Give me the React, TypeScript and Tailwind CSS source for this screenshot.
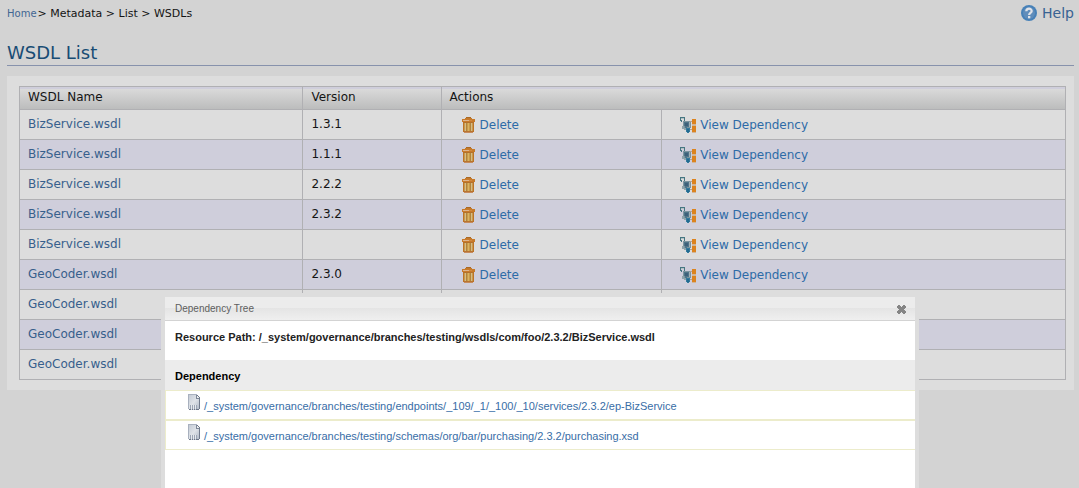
import React from "react";

type Row = { name: string; version?: string; editable?: boolean };

const rows: Row[] = [
  { name: "BizService.wsdl", version: "1.3.1", editable: true },
  { name: "BizService.wsdl", version: "1.1.1", editable: true },
  { name: "BizService.wsdl", version: "2.2.2", editable: true },
  { name: "BizService.wsdl", version: "2.3.2", editable: true },
  { name: "BizService.wsdl", editable: true },
  { name: "GeoCoder.wsdl", version: "2.3.0", editable: true },
  { name: "GeoCoder.wsdl" },
  { name: "GeoCoder.wsdl" },
  { name: "GeoCoder.wsdl" },
];

const dependencies = [
  "/_system/governance/branches/testing/endpoints/_109/_1/_100/_10/services/2.3.2/ep-BizService",
  "/_system/governance/branches/testing/schemas/org/bar/purchasing/2.3.2/purchasing.xsd",
];

function TrashIcon() {
  return (
    <svg width="13" height="16" viewBox="0 0 13 16" shapeRendering="crispEdges" aria-hidden="true">
      <path d="M4 0h5v1H4z" fill="#ac6a24" />
      <path d="M3 1h7v1H3z" fill="#c27a2c" />
      <path d="M0 2h13v3H0z" fill="#c87a2a" />
      <path d="M1 3h6v1H1z" fill="#deb48c" />
      <path d="M7 3h3v1H7z" fill="#d08a40" />
      <path d="M1 5h11v10H1z" fill="#c99a4c" />
      <path d="M1 5h11v1H1z" fill="#b4702c" />
      <path d="M1 6h1v9H1zM11 6h1v9h-1z" fill="#bd7326" />
      <path d="M3 6h1v8H3zM9 6h1v8H9z" fill="#d5bb88" />
      <path d="M4 6h1v8H4zM8 6h1v8H8z" fill="#b0853c" />
      <path d="M6 6h1v8H6z" fill="#d8b562" />
      <path d="M2 14h9v1H2z" fill="#b87432" />
      <path d="M2 15h9v1H2z" fill="#c58b5c" />
    </svg>
  );
}

function DependencyIcon() {
  return (
    <svg width="16" height="16" viewBox="0 0 16 16" shapeRendering="crispEdges" aria-hidden="true">
      <path d="M9 4h3v1H9zM8 12h4v1H8z" fill="#b3a08f" />
      <path d="M0 0h5v1H0zM0 1h1v3H0zM4 1h1v3H4zM1 3h1v2H1z" fill="#477681" />
      <path d="M1 1h3v1H1z" fill="#b0c0c3" />
      <path d="M3 4h7v1h1v6H9v1H5v-1H4V9H3z" fill="#7d959f" />
      <path d="M4 5h5v5H7v1H5V9H4z" fill="#4f7589" />
      <path d="M5 6h3v3H5z" fill="#3d6079" />
      <path d="M9 5h1v5H9z" fill="#a3b0b5" />
      <path d="M2 9h2v2h2v2H4v-1H2z" fill="#8ea3aa" />
      <path d="M6 11h4v4H9v1H7v-1H6z" fill="#34799b" />
      <path d="M7 12h2v3H7z" fill="#216b91" />
      <path d="M12 2h4v5h-4zM12 9h4v6h-4z" fill="#dc831e" />
      <path d="M12 7h4v1h-4zM12 8h4v1h-4zM12 15h4v1h-4z" fill="#d0b598" />
    </svg>
  );
}

function HelpIcon() {
  return (
    <svg width="16" height="16" viewBox="0 0 16 16" aria-hidden="true">
      <circle cx="8" cy="8" r="8" fill="#4781b8" />
      <circle cx="8" cy="8" r="6" fill="#608dbb" />
      <path d="M5.300 6.300C5.400 2.800 10.700 3 10.700 6 10.700 7.900 8.100 7.900 8.100 10" fill="none" stroke="#e0e3e8" strokeWidth="2.2" />
      <path d="M7 11h2.300v2.300H7z" fill="#e0e3e8" />
    </svg>
  );
}

function DocumentIcon() {
  return (
    <svg width="12" height="16" viewBox="0 0 12 16" shapeRendering="crispEdges" aria-hidden="true">
      <defs>
        <linearGradient id="sheet" x1="0" y1="0" x2="1" y2="1">
          <stop offset="0" stopColor="#c0c7d2" />
          <stop offset=".5" stopColor="#dfe3e8" />
          <stop offset="1" stopColor="#aab4c3" />
        </linearGradient>
      </defs>
      <path d="M0 0h9v1h1v1h1v1h1v12h-1v1H1v-1H0z" fill="url(#sheet)" />
      <path d="M0 0h9v1H0zM0 1h1v14H0z" fill="#a9b1bf" />
      <path d="M8 1h1v3h3v1H8z" fill="#7d8797" />
      <path d="M9 1h1v1h1v2H9z" fill="#eef0f3" />
      <path d="M9 1h1v1H9zM10 2h1v1h-1zM11 3h1v12h-1z" fill="#707a8b" />
      <path d="M2 11h1v4H2zM4 11h1v4H4zM6 11h1v4H6zM8 11h1v4H8z" fill="#9ba5b4" />
      <path d="M3 11h1v4H3zM5 11h1v4H5zM7 11h1v4H7z" fill="#e6e9ed" />
      <path d="M1 15h2v1H1zM4 15h1v1H4zM6 15h1v1H6zM8 15h3v1H8z" fill="#6d7788" />
    </svg>
  );
}

function CloseIcon() {
  return (
    <svg width="9" height="9" viewBox="0 0 9 9" shapeRendering="crispEdges" aria-hidden="true">
      <path d="M1 0h2v1h1v1h1V1h1V0h2v1h1v2H8v1H7v1h1v1h1v2H8v1H6V8H5V7H4v1H3v1H1V8H0V6h1V5h1V4H1V3H0V1h1z" fill="#858585" />
    </svg>
  );
}

const cell = "border border-[#b0b0b3]";

export default function App() {
  return (
    <div className="min-h-screen bg-[#d3d3d3] pl-[7px] pr-[5px] font-['DejaVu_Sans',sans-serif] text-xs text-[#141414]">
      <header className="flex items-start justify-between">
        <nav aria-label="Breadcrumb" className="flex items-baseline gap-px pt-[6px] text-[11px] leading-4">
          <a href="#home" className="text-[10px] text-[#426692]">Home</a>
          <span>&gt; Metadata &gt; List &gt; WSDLs</span>
        </nav>
        <a href="#help" className="flex items-center gap-[5px] pt-[3px] text-sm leading-5 text-[#386292]">
          <HelpIcon />
          Help
        </a>
      </header>
      <h1 className="mt-[18px] border-b border-[#8792ac] text-lg leading-6 text-[#184c74]">WSDL List</h1>
      <main className="mt-[10px] bg-[#dddddd] pb-[10px] pl-3 pr-2 pt-[10px]">
        <table className="w-full table-fixed border-collapse text-left">
          <colgroup>
            <col className="w-[27.1%]" />
            <col className="w-[13.2%]" />
            <col className="w-[21.1%]" />
            <col />
          </colgroup>
          <thead>
            <tr className="h-[23px] bg-linear-to-b from-[#dddddd] to-[#babbbb] align-top leading-5">
              <th className={`${cell} px-2 font-normal shadow-[inset_0_2px_0_#cfcedb]`}>WSDL Name</th>
              <th className={`${cell} px-2 font-normal shadow-[inset_0_2px_0_#cfcedb]`}>Version</th>
              <th colSpan={2} className={`${cell} px-2 font-normal shadow-[inset_0_2px_0_#cfcedb]`}>Actions</th>
            </tr>
          </thead>
          <tbody>
            {rows.map((row, i) => (
              <tr key={i} className="h-[30px] align-top leading-5 even:bg-[#cfcedb]">
                <td className={`${cell} px-2 pt-1`}>
                  <a href="#wsdl" className="text-[#375f8c]">{row.name}</a>
                </td>
                <td className={`${cell} px-2 pt-1`}>{row.version}</td>
                <td className={`${cell} pl-5 pt-[5px]`}>
                  {row.editable && (
                    <a href="#delete" className="flex items-center gap-[5px] text-[#2d6ba7]">
                      <TrashIcon />
                      Delete
                    </a>
                  )}
                </td>
                <td className={`${cell} pl-[18px] pt-[5px]`}>
                  {row.editable && (
                    <a href="#dependency" className="flex items-center gap-1 text-[#2d6ba7]">
                      <DependencyIcon />
                      View Dependency
                    </a>
                  )}
                </td>
              </tr>
            ))}
          </tbody>
        </table>
      </main>

      <section
        role="dialog"
        aria-labelledby="dialog-title"
        className="fixed bottom-0 left-[161px] right-[160px] top-[293px] border-4 border-b-0 border-[#dddddd] bg-white font-['Liberation_Sans',sans-serif] text-[11px]"
      >
        <div className="flex h-6 items-center justify-between border-b border-[#d3d3d3] bg-[linear-gradient(#ececec_0,#ececec_11px,#e4e4e4_11px,#efefef_23px)] pl-[10px] pr-[9px] pt-px">
          <h2 id="dialog-title" className="text-[10px] text-[#5e5e5e]">Dependency Tree</h2>
          <button type="button" aria-label="Close">
            <CloseIcon />
          </button>
        </div>
        <p className="pb-[15px] pl-[10px] pt-2 font-bold leading-4 text-[#222222]">
          Resource Path: /_system/governance/branches/testing/wsdls/com/foo/2.3.2/BizService.wsdl
        </p>
        <h3 className="bg-[#ececec] pb-[6px] pl-[10px] pt-2 font-bold leading-4 text-black">Dependency</h3>
        <ul>
          {dependencies.map((path) => (
            <li key={path} className="h-[30px] border-y border-l border-[#ececcb] pl-[22px] pt-[3px]">
              <a href="#resource" className="flex gap-1 leading-6 text-[#386da6]">
                <DocumentIcon />
                {path}
              </a>
            </li>
          ))}
        </ul>
      </section>
    </div>
  );
}
